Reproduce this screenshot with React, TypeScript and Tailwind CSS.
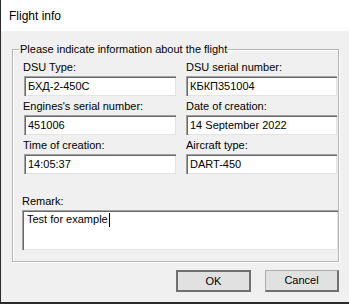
import React from "react";

type FieldProps = {
  label: string;
  value: string;
  inputClassName?: string;
};

function Field({ label, value, inputClassName = "w-[152px] ml-[1px]" }: FieldProps) {
  return (
    <div className="flex flex-col">
      <div className="leading-[13px] h-[13px] whitespace-nowrap">{label}</div>
      <div
        className={`mt-[2px] h-[20px] bg-white border-t border-l border-[#a0a0a0] border-r-white border-b-white shadow-[inset_1px_1px_0_#696969,inset_-1px_-1px_0_#e3e3e3] flex items-center pl-[3px] leading-[13px] whitespace-nowrap ${inputClassName}`}
      >
        {value}
      </div>
    </div>
  );
}

export default function App() {
  return (
    <div className="w-[349px] h-[304px] bg-[#f0f0f0] border-l border-b-2 border-[#2b2b2b] flex flex-col font-['Liberation_Sans',Arial,sans-serif] text-[11px] text-black overflow-hidden">
      <div className="h-[31px] bg-white pl-[8px] flex items-center text-[12px] shrink-0">
        Flight info
      </div>

      <div className="pl-[11px] pt-[12px] flex flex-col">
        <fieldset className="w-[327px] h-[219px] border border-[#b4b4b4] shadow-[1px_1px_0_#fff,inset_1px_1px_0_#fff] p-0 m-0">
          <legend className="ml-[6px] px-[1px] leading-[13px]">
            Please indicate information about the flight
          </legend>

          <div className="pl-[10px] pt-[5px] grid grid-cols-[153px_151px] gap-x-[10px] gap-y-[4px]">
            <Field label="DSU Type:" value="БХД-2-450С" />
            <Field label="DSU serial number:" value="КБКП351004" inputClassName="w-[151px]" />
            <Field label="Engines's serial number:" value="451006" />
            <Field label="Date of creation:" value="14 September 2022" inputClassName="w-[151px]" />
            <Field label="Time of creation:" value="14:05:37" />
            <Field label="Aircraft type:" value="DART-450" inputClassName="w-[151px]" />
          </div>

          <div className="pl-[9px] mt-[21px] flex flex-col">
            <div className="leading-[13px] h-[13px]">Remark:</div>
            <div className="mt-[2px] w-[316px] h-[40px] bg-white border-t border-l border-[#a0a0a0] border-r-white border-b-white shadow-[inset_1px_1px_0_#696969,inset_-1px_-1px_0_#e3e3e3] pl-[4px] pt-[2px] leading-[13px] flex items-start">
              <span>Test for example</span>
              <span className="inline-block w-[1px] h-[14px] bg-black ml-[1px]" />
            </div>
          </div>
        </fieldset>

        <div className="flex justify-end gap-[14px] w-[327px] mt-[8px]">
          <button className="w-[75px] h-[22px] bg-[#e1e1e1] border-2 border-[#707070] text-[11px] leading-[13px]">
            OK
          </button>
          <button className="w-[74px] h-[22px] bg-[#e1e1e1] border border-[#adadad] border-r-2 border-b-2 border-r-[#707070] border-b-[#707070] text-[11px] leading-[13px]">
            Cancel
          </button>
        </div>
      </div>
    </div>
  );
}
